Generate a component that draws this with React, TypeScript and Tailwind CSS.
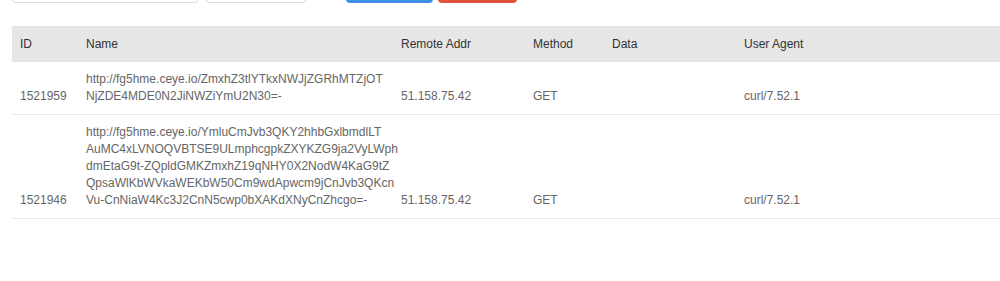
import React from "react";

type Record = {
  id: string;
  name: string[];
  addr: string;
  method: string;
  data: string;
  ua: string;
};

const records: Record[] = [
  {
    id: "1521959",
    name: [
      "http://fg5hme.ceye.io/ZmxhZ3tlYTkxNWJjZGRhMTZjOT",
      "NjZDE4MDE0N2JiNWZiYmU2N30=-",
    ],
    addr: "51.158.75.42",
    method: "GET",
    data: "",
    ua: "curl/7.52.1",
  },
  {
    id: "1521946",
    name: [
      "http://fg5hme.ceye.io/YmluCmJvb3QKY2hhbGxlbmdlLT",
      "AuMC4xLVNOQVBTSE9ULmphcgpkZXYKZG9ja2VyLWph",
      "dmEtaG9t-ZQpldGMKZmxhZ19qNHY0X2NodW4KaG9tZ",
      "QpsaWlKbWVkaWEKbW50Cm9wdApwcm9jCnJvb3QKcn",
      "Vu-CnNiaW4Kc3J2CnN5cwp0bXAKdXNyCnZhcgo=-",
    ],
    addr: "51.158.75.42",
    method: "GET",
    data: "",
    ua: "curl/7.52.1",
  },
];

export default function App() {
  return (
    <div className="h-[281px] w-[1000px] overflow-hidden bg-white font-['Liberation_Sans',Arial,sans-serif] text-[12px]">
      {/* Toolbar, scrolled mostly out of view */}
      <div className="-mt-[29px] flex h-8 items-stretch pl-3">
        <div className="w-[187px] rounded border border-[#dcdcdc] bg-white" />
        <div className="ml-[6px] w-[102px] rounded border border-[#dcdcdc] bg-white" />
        <button className="ml-[39px] w-[87px] rounded bg-[#3e8fe6]" />
        <button className="ml-[5px] w-[79px] rounded bg-[#e2533f]" />
      </div>

      <div className="mt-[23px] pl-3">
        <table className="w-[988px] table-fixed border-collapse">
          <colgroup>
            <col className="w-[66px]" />
            <col className="w-[315px]" />
            <col className="w-[132px]" />
            <col className="w-[79px]" />
            <col className="w-[132px]" />
            <col />
          </colgroup>
          <thead>
            <tr className="h-[36px] bg-[#e6e6e6] text-left text-[#333]">
              <th className="pl-2 font-normal">ID</th>
              <th className="pl-2 font-normal">Name</th>
              <th className="pl-2 font-normal">Remote Addr</th>
              <th className="pl-2 font-normal">Method</th>
              <th className="pl-2 font-normal">Data</th>
              <th className="pl-2 font-normal">User Agent</th>
            </tr>
          </thead>
          <tbody className="text-[#666]">
            {records.map((r) => (
              <tr key={r.id} className="border-b border-[#ebebeb] align-bottom leading-[17px]">
                <td className="py-[9px] pl-2">{r.id}</td>
                <td className="py-[9px] pl-2">
                  {r.name.map((line) => (
                    <div key={line} className="whitespace-nowrap">
                      {line}
                    </div>
                  ))}
                </td>
                <td className="py-[9px] pl-2">{r.addr}</td>
                <td className="py-[9px] pl-2">{r.method}</td>
                <td className="py-[9px] pl-2">{r.data}</td>
                <td className="py-[9px] pl-2">{r.ua}</td>
              </tr>
            ))}
          </tbody>
        </table>
      </div>
    </div>
  );
}
